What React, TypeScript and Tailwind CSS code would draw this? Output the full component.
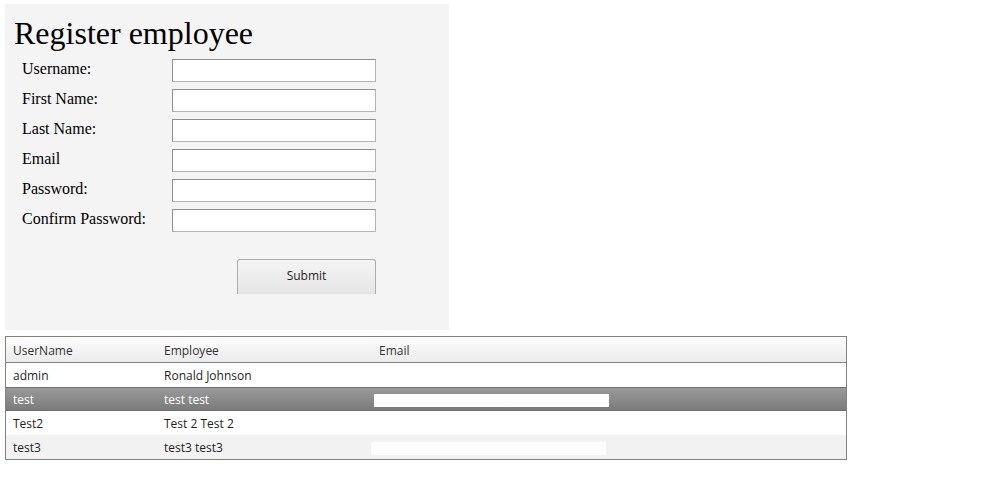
const FIELDS = [
  "Username:",
  "First Name:",
  "Last Name:",
  "Email",
  "Password:",
  "Confirm Password:",
]

const ROWS = [
  { user: "admin", name: "Ronald Johnson", email: false, style: "bg-white text-[#1e1e1e]" },
  { user: "test", name: "test test", email: true, style: "selected" },
  { user: "Test2", name: "Test 2 Test 2", email: false, style: "bg-white text-[#1e1e1e]" },
  { user: "test3", name: "test3 test3", email: true, style: "bg-[#f2f2f2] text-[#1e1e1e]" },
]

export default function App() {
  return (
    <div className="min-h-[501px] w-[985px] bg-white pl-[5px] pt-[4px]">
      {/* Form */}
      <div className="flex h-[326px] w-[444px] flex-col bg-[#f4f4f4] font-['Liberation_Serif',serif] text-black">
        <h1 className="pl-[9px] pt-[10px] text-[32px] leading-[38px]">Register employee</h1>
        <div className="mt-[7px] flex flex-col gap-[7px] pl-[17px]">
          {FIELDS.map((f) => (
            <div key={f} className="flex h-[23px] items-center">
              <label className="w-[150px] pb-[3px] text-[16px] leading-[20px]">{f}</label>
              <input
                type="text"
                className="h-[23px] w-[204px] border border-t-[#8f8f8f] border-l-[#8f8f8f] border-r-[#b5b5b5] border-b-[#b5b5b5] bg-white outline-none"
              />
            </div>
          ))}
        </div>
        <div className="mt-[27px] flex pl-[232px]">
          <button className="h-[35px] w-[139px] rounded-t-[3px] border border-b-0 border-[#adadad] bg-gradient-to-b from-[#f4f4f4] to-[#e5e5e5] pb-[2px] font-['Open_Sans',sans-serif] text-[12px] text-[#1e1e1e]">
            Submit
          </button>
        </div>
      </div>

      {/* Table */}
      <div className="mt-[6px] w-[842px] border border-[#828282] font-['Open_Sans',sans-serif] text-[12px]">
        <div className="flex h-[26px] items-center border-b border-[#828282] bg-gradient-to-b from-[#fdfdfd] to-[#ebebeb] pt-[2px] text-[#333]">
          <div className="w-[151px] pl-[7px]">UserName</div>
          <div className="w-[214px] pl-[7px]">Employee</div>
          <div className="pl-[8px]">Email</div>
        </div>
        {ROWS.map((r) => (
          <div
            key={r.user}
            className={`flex h-[24px] items-center pt-[2px] ${
              r.style === "selected"
                ? "border-y border-[#6e6e6e] bg-gradient-to-b from-[#9a9a9a] to-[#7b7b7b] text-white"
                : r.style
            }`}
          >
            <div className="w-[151px] pl-[7px]">{r.user}</div>
            <div className="w-[214px] pl-[7px]">{r.name}</div>
            {r.email && (
              <div className={`h-[13px] w-[235px] bg-[#fefefe] ${r.style === "selected" ? "ml-[3px]" : "ml-0"}`} />
            )}
          </div>
        ))}
      </div>
    </div>
  )
}
